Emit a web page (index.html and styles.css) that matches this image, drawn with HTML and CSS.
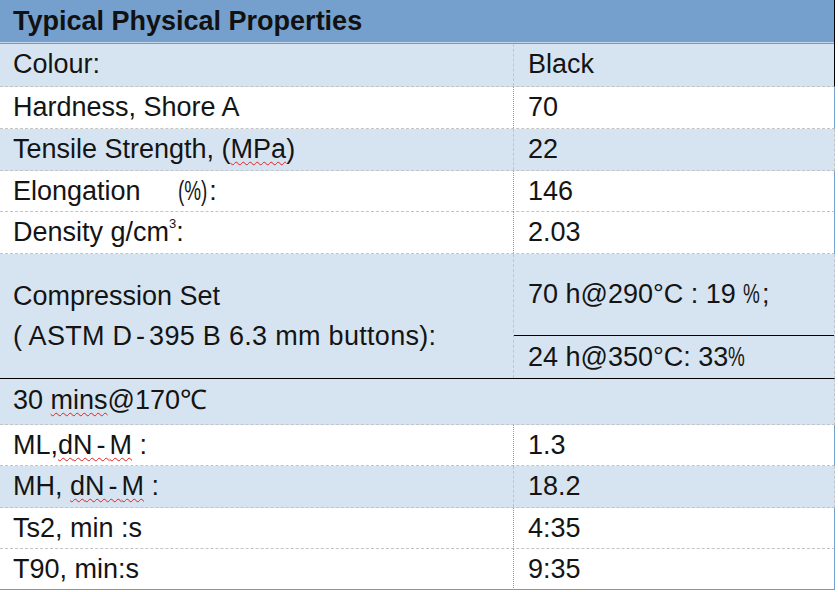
FILE: index.html
```html
<!DOCTYPE html>
<html>
<head>
<meta charset="utf-8">
<link rel="stylesheet" href="styles.css">
</head>
<body>
<div class="sheet">
  <div class="head">Typical Physical Properties</div>

  <div class="row blue edge-black h43">
    <div class="lc">Colour:</div>
    <div class="rc">Black</div>
  </div>
  <div class="row white h42">
    <div class="lc">Hardness, Shore A</div>
    <div class="rc">70</div>
  </div>
  <div class="row blue h42">
    <div class="lc">Tensile Strength, (<span class="spell">MPa</span>)</div>
    <div class="rc">22</div>
  </div>
  <div class="row white h41">
    <div class="lc">Elongation&nbsp;&nbsp;&nbsp;&nbsp;&nbsp;<span class="narrow">(%)</span>:</div>
    <div class="rc">146</div>
  </div>
  <div class="row white h42">
    <div class="lc">Density g/cm<sup class="sup">3</sup>:</div>
    <div class="rc">2.03</div>
  </div>

  <div class="row blue comp">
    <div class="lc stack">
      <span>Compression Set</span>
      <span class="wide">( ASTM <span class="ls">D-</span>395 B 6.3 mm buttons):</span>
    </div>
    <div class="rc split">
      <div class="sub top arial">70 h@290°C : 19 <span class="narrow pct">%</span>;</div>
      <div class="sub bottom arial">24 h@350°C: 33<span class="narrow pct">%</span></div>
    </div>
  </div>

  <div class="row blue full h46">
    <div class="lc"><span class="num">30</span> <span class="spell">mins</span>@170℃</div>
  </div>
  <div class="row white h41">
    <div class="lc">ML,<span class="spell">d<span class="ls">N-</span>M</span> :</div>
    <div class="rc">1.3</div>
  </div>
  <div class="row blue h42">
    <div class="lc">MH, <span class="spell">d<span class="ls">N-</span>M</span> :</div>
    <div class="rc">18.2</div>
  </div>
  <div class="row white h41">
    <div class="lc arial">Ts2, min :s</div>
    <div class="rc arial">4:35</div>
  </div>
  <div class="row white last h41">
    <div class="lc arial">T90, min:s</div>
    <div class="rc arial">9:35</div>
  </div>
</div>
</body>
</html>
```

FILE: styles.css
```css
html, body {
  margin: 0;
  padding: 0;
  background: #ffffff;
}

.sheet {
  width: 835px;
  font-family: "Liberation Sans", Arial, sans-serif;
  font-size: 27px;
  color: #141414;
}

.head {
  box-sizing: border-box;
  height: 44px;
  padding-left: 13px;
  font-weight: bold;
  font-size: 27px;
  line-height: 42px;
  color: #111;
  background: linear-gradient(#75a0cd 0, #75a0cd 42px, #c3d5ea 42px, #c3d5ea 43px, #6f9bcb 43px);
  border-right: 1px solid #000;
}

.row {
  box-sizing: border-box;
  display: grid;
  grid-template-columns: 513px 1fr;
  border-bottom: 1px dashed #c4c4c4;
  border-right: 1px solid #76a0cd;
}

.row.blue {
  background: #d6e4f2;
  border-right: 1px dashed #c4c4c4;
}

.row.white {
  background: #ffffff;
}

.row.edge-black {
  border-right: 1px solid #000;
}

.h41 { height: 41px; }
.h42 { height: 42px; }
.h43 { height: 43px; }
.h46 { height: 46px; }

.lc {
  padding-left: 13px;
  line-height: 41px;
  white-space: nowrap;
}

.rc {
  padding-left: 14px;
  line-height: 41px;
  white-space: nowrap;
  border-left: 1px dotted #7a9fcc;
}

.row.blue .rc {
  border-left: 1px dashed #c4c4c4;
}

.row.full {
  grid-template-columns: 1fr;
}

.row.full .lc {
  line-height: 43px;
}

.comp {
  height: 125px;
  border-bottom: 1px solid #000;
}

.stack {
  display: flex;
  flex-direction: column;
  justify-content: center;
  line-height: 40px;
}

.wide {
  letter-spacing: 0.3px;
}

.ls {
  letter-spacing: 4px;
}

.split {
  padding-left: 0;
  display: flex;
  flex-direction: column;
}

.sub {
  box-sizing: border-box;
  padding-left: 14px;
}

.sub.top {
  height: 82px;
  line-height: 80px;
  border-bottom: 1px solid #000;
}

.sub.bottom {
  height: 42px;
  line-height: 42px;
}

.row.last {
  border-bottom: 1px solid #6f9bcb;
}

.spell {
  text-decoration: underline wavy #e0201e;
  text-decoration-thickness: 1px;
  text-underline-offset: 3px;
}

.narrow {
  display: inline-block;
  transform: scaleX(0.7);
  transform-origin: left center;
  margin-right: -0.4em;
}

.narrow.pct {
  margin-right: -0.2em;
}

.sup {
  font-size: 13px;
  vertical-align: 13px;
  line-height: 0;
}

.arial {
  font-family: "Liberation Sans", Arial, sans-serif;
}
```
